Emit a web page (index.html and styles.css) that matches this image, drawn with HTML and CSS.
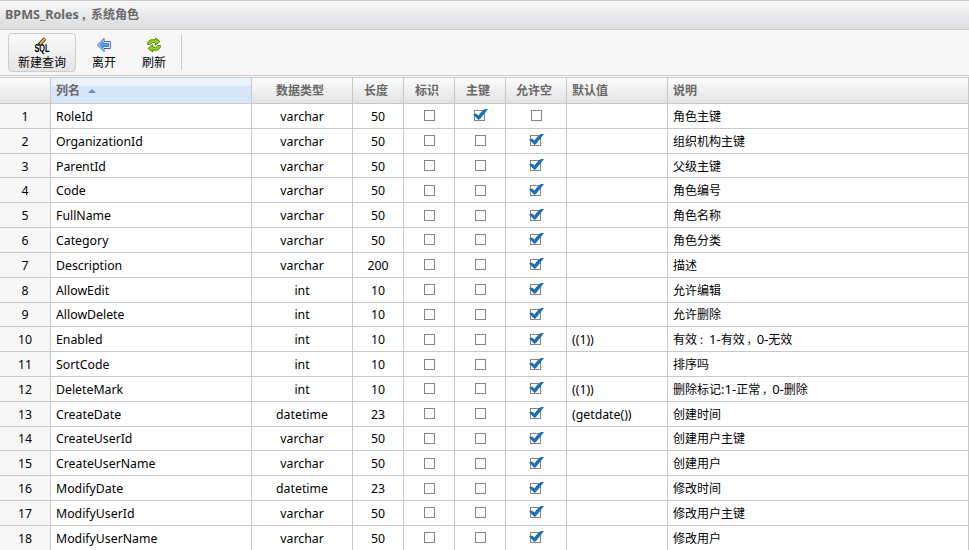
FILE: index.html
```html
<!DOCTYPE html>
<html lang="zh-CN">
<head>
<meta charset="utf-8">
<title>BPMS_Roles</title>
<link rel="stylesheet" href="styles.css">
</head>
<body>
<header class="title"><span class="en">BPMS_Roles</span><span class="comma">，</span>系统角色</header>
<nav class="toolbar">
  <a class="tool active"><svg width="16" height="16" viewBox="0 0 16 16"><text class="sql" x="0.500" y="14.800" textLength="15" lengthAdjust="spacingAndGlyphs">SQL</text><path d="M5 8 11 1.500" stroke="#222" stroke-width="3.500"/><path d="M6 7 11 1.500" stroke="#e8b53c" stroke-width="2"/></svg><span>新建查询</span></a>
  <a class="tool"><svg width="16" height="16" viewBox="0 0 16 16"><path d="M1.500 8 8 1.500V4.500H14.300V11.500H8V14.500Z" fill="#fff" stroke="#4659b5" stroke-linejoin="round"/><path d="M3.300 8 7 4.500V6.500H12.500V9.500H7V11.500Z" fill="#4aa5f5" stroke="#2478dc" stroke-width=".9"/></svg><span>离开</span></a>
  <a class="tool"><svg width="16" height="16" viewBox="0 0 16 16"><g fill="#8fce1c" stroke="#4b8b12" stroke-width=".9" stroke-linejoin="round"><path d="M1.500 7.500C1.500 3.500 5 1.800 9.500 3V1L14 4.600 9.500 8.200V6C7 5.200 5 5.800 4.500 7.500Z"/><path d="M14.500 8.500C14.500 12.500 11 14.200 6.500 13V15L2 11.400 6.500 7.800V10C9 10.800 11 10.200 11.500 8.500Z"/></g></svg><span>刷新</span></a>
  <i class="sep"></i>
</nav>
<main class="grid" id="grid">
  <div class="row head"><div></div><div class="sorted">列名<i class="arrow"></i></div><div>数据类型</div><div>长度</div><div>标识</div><div>主键</div><div>允许空</div><div>默认值</div><div>说明</div></div>
</main>
<script src="script.js"></script>
</body>
</html>
```
FILE: styles.css
```css
* { box-sizing: border-box; }
body { margin: 0; height: 550px; overflow: hidden; background: #fff; color: #000; font: 12px/18px "Noto Sans", "Noto Sans CJK SC", sans-serif; }
.title { display: flex; height: 30px; padding: 5px 5px 0; border-top: 1px solid #c9c9c9; border-bottom: 1px solid #c9c9c9; background: linear-gradient(#f9f9f9, #e1e2e4 75%, #e2e2e2); color: #686868; font-weight: bold; }
.title .en { width: 74px; font-size: 12.6px; }
.comma { display: inline-block; width: 12px; padding-left: 2px; font-size: 10px; }
.toolbar { display: flex; height: 46px; padding: 3px 8px 0; background: #f7f7f7; border-bottom: 1px solid #c9c9c9; }
.tool { display: flex; flex-direction: column; align-items: center; width: 50px; height: 39px; padding-top: 4px; border-radius: 4px; }
.tool.active { width: 68px; margin-right: 3px; border: 1px solid #ccc; padding-top: 3px; background: linear-gradient(#fbfbfb, #e5e5e5); }
.tool svg { display: block; flex: none; overflow: visible; }
.tool span { line-height: 20px; }
.sql { font: bold 11px "Liberation Sans", sans-serif; }
.sep { width: 1px; height: 35px; margin: 2px 0 0 2px; background: #c9c9c9; }
.grid { margin-top: 1px; border-top: 1px solid #c9c9c9; }
.row { display: grid; grid-template-columns: 51px 201px 101px 51px 51px 51px 61px 101px 301px; height: 24.82px; }
.row > div { display: flex; align-items: center; justify-content: center; padding-top: 2px; border-right: 1px solid #c9c9c9; border-bottom: 1px solid #c9c9c9; white-space: nowrap; }
.row > div:nth-child(2), .row > div:nth-child(8), .row > div:nth-child(9) { justify-content: flex-start; padding-left: 5px; }
.row > div:first-child { background: #f7f7f7; }
.row.head { height: 26px; font-weight: bold; color: #686868; }
.row.head > div { padding-top: 0; padding-right: 4px; background: linear-gradient(#fcfcfc, #e4e4e4); }
.row.head > .sorted { background: linear-gradient(#eaf2fc 8px, #d7e7f9 8px); }
.arrow { margin: 1px 0 0 8px; border: 4px solid transparent; border-top: 0; border-bottom-color: #5b8fd0; }
.en { font-size: 12.3px; }
.note .en { font-size: 13px; line-height: 1; }
.row > .box { padding-top: 0; }
.check { display: block; width: 15px; height: 13px; margin: -2px 0 0 3px; overflow: visible; }
```
FILE: script.js
```javascript
const rows = [
  ["RoleId", "varchar", 50, "", "角色主键"],
  ["OrganizationId", "varchar", 50, "", "组织机构主键"],
  ["ParentId", "varchar", 50, "", "父级主键"],
  ["Code", "varchar", 50, "", "角色编号"],
  ["FullName", "varchar", 50, "", "角色名称"],
  ["Category", "varchar", 50, "", "角色分类"],
  ["Description", "varchar", 200, "", "描述"],
  ["AllowEdit", "int", 10, "", "允许编辑"],
  ["AllowDelete", "int", 10, "", "允许删除"],
  ["Enabled", "int", 10, "((1))", "有效：1-有效，0-无效"],
  ["SortCode", "int", 10, "", "排序吗"],
  ["DeleteMark", "int", 10, "((1))", "删除标记:1-正常，0-删除"],
  ["CreateDate", "datetime", 23, "(getdate())", "创建时间"],
  ["CreateUserId", "varchar", 50, "", "创建用户主键"],
  ["CreateUserName", "varchar", 50, "", "创建用户"],
  ["ModifyDate", "datetime", 23, "", "修改时间"],
  ["ModifyUserId", "varchar", 50, "", "修改用户主键"],
  ["ModifyUserName", "varchar", 50, "", "修改用户"]
];
const box = on => `<svg class="check" viewBox="0 0 15 13"><rect x="${on ? 0.5 : 1.5}" y="2.5" width="10" height="10" fill="#fff" stroke="#858585"/>${on ? '<path d="M-1 6.500 2 5.500 4.500 7.500C6.500 4.500 9 2 11 1H14L6 11 4.500 12Z" fill="#1a6fb5"/>' : ""}</svg>`;
const cell = (v, c = "") => `<div class="${c}">${v}</div>`;
const punctuate = s => '<span class="note">' + s.replace(/[，：]/g, '<span class="comma">$&</span>').replace(/:?[01]-/g, '<span class="en">$&</span>') + "</span>";
document.getElementById("grid").insertAdjacentHTML("beforeend", rows.map(([name, type, len, def, note], i) =>
  '<div class="row">' + cell(i + 1, "en") + cell(name, "en") + cell(type, "en") + cell(len, "en") +
  cell(box(false), "box") + cell(box(i === 0), "box") + cell(box(i > 0), "box") + cell(def, "en") + cell(punctuate(note)) + "</div>").join(""));
```
